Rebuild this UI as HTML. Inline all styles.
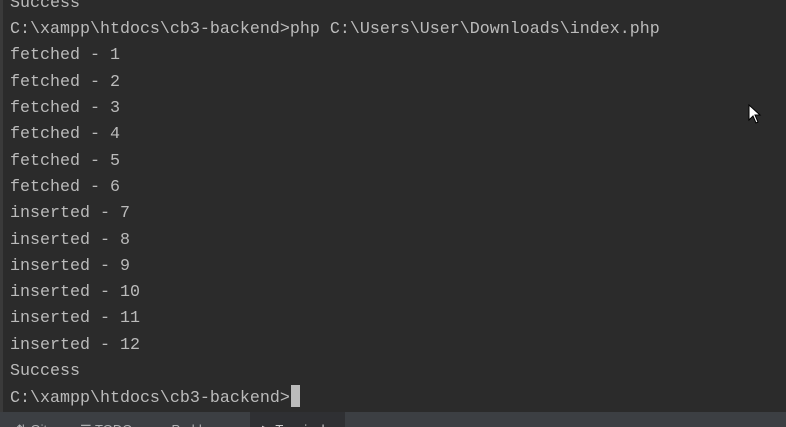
<!DOCTYPE html>
<html><head><meta charset="utf-8"><style>
html,body{margin:0;padding:0;width:786px;height:427px;overflow:hidden;background:#2b2b2b;}
.l{position:absolute;left:0;top:0;width:3px;height:412px;background:#3a3a3a;}
pre{position:absolute;left:10px;top:-9.15px;margin:0;font-family:"Liberation Mono",monospace;font-size:16.67px;line-height:26.3px;color:#bbbbbb;}
.cur{display:inline-block;width:9px;height:22px;background:#bbbbbb;vertical-align:-5px;margin-left:1px;}
.bar{position:absolute;left:0;top:412px;width:786px;height:15px;background:#3c3f43;font-family:"Liberation Sans",sans-serif;font-size:13px;color:#afb1b3;overflow:hidden;}
.bar span{position:absolute;top:10px;}
.tab{position:absolute;left:250px;top:0;width:95px;height:15px;background:#2f3033;}
</style></head><body>
<div class="l"></div>
<pre>Success
C:\xampp\htdocs\cb3-backend>php C:\Users\User\Downloads\index.php
fetched - 1
fetched - 2
fetched - 3
fetched - 4
fetched - 5
fetched - 6
inserted - 7
inserted - 8
inserted - 9
inserted - 10
inserted - 11
inserted - 12
Success
C:\xampp\htdocs\cb3-backend><span class="cur"></span></pre>
<svg style="position:absolute;left:748px;top:104px" width="14" height="20" viewBox="0 0 14 20"><path d="M1 1 L1 16 L5 12 L8 19 L10 18 L7 11 L12 11 Z" fill="#fff" stroke="#000" stroke-width="1"/></svg>
<div class="bar"><div class="tab"></div>
<span style="left:16px">⇅ Git</span><span style="left:80px">☰ TODO</span><span style="left:160px">● Problems</span><span style="left:262px;color:#ccc">▶ Terminal</span></div>
</body></html>
